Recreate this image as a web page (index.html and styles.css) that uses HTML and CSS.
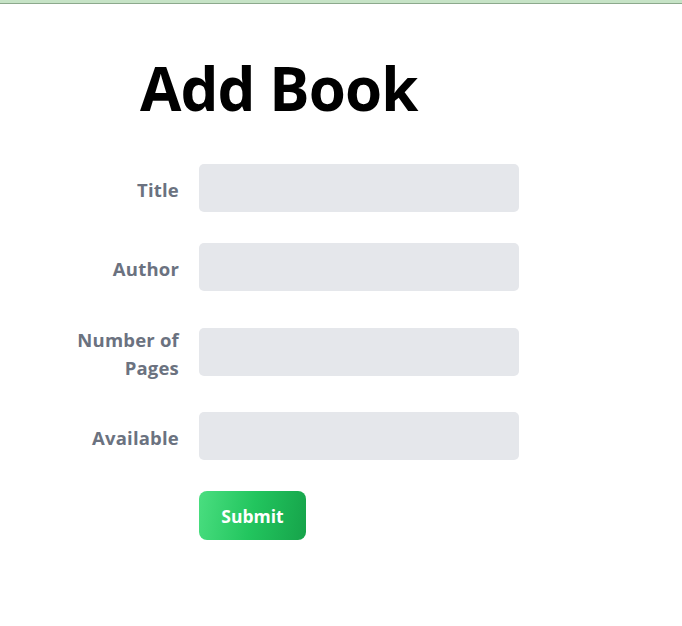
FILE: index.html
```html
<!DOCTYPE html>
<html lang="en">
<head>
<meta charset="utf-8">
<title>Add Book</title>
<link rel="stylesheet" href="styles.css">
</head>
<body>
<div class="topbar"></div>
<main class="page">
  <h1 class="heading">Add Book</h1>
  <form class="book-form">
    <label class="field-label" for="title">Title</label>
    <input class="field-input" id="title" type="text">
    <label class="field-label" for="author">Author</label>
    <input class="field-input" id="author" type="text">
    <label class="field-label" for="pages">Number of Pages</label>
    <input class="field-input" id="pages" type="text">
    <label class="field-label" for="available">Available</label>
    <input class="field-input" id="available" type="text">
    <span></span>
    <div class="actions"><button class="submit" type="button">Submit</button></div>
  </form>
</main>
</body>
</html>
```
FILE: styles.css
```css
* { box-sizing: border-box; }
html, body { margin: 0; padding: 0; background: #ffffff; }
body { font-family: "Open Sans", "Noto Sans", sans-serif; }
.topbar {
  height: 4px;
  background: #c6e3c6;
  border-bottom: 1px solid #8ca98c;
}
.heading {
  margin: 48px 0 0 140px;
  font-size: 60px;
  line-height: 72px;
  font-weight: 700;
  color: #000;
  letter-spacing: -0.9px;
}
.book-form {
  margin-top: 40px;
  margin-left: 29px;
  display: grid;
  grid-template-columns: 170px 320px;
  row-gap: 31px;
  align-items: center;
}
.field-label {
  padding: 4px 20px 0 0;
  text-align: right;
  font-size: 18.5px;
  line-height: 27.5px;
  font-weight: 700;
  color: #6b7280;
  letter-spacing: 0.2px;
}
.field-input {
  height: 48px;
  width: 320px;
  border: 0;
  border-radius: 5px;
  background: #e5e7eb;
}
.actions { display: flex; }
.submit {
  width: 107px;
  height: 49px;
  border: 0;
  border-radius: 8px;
  background: linear-gradient(100deg, #4ade80 0%, #22c55e 50%, #16a34a 100%);
  color: #fff;
  font-family: inherit;
  font-size: 17.5px;
  font-weight: 700;
}
```
